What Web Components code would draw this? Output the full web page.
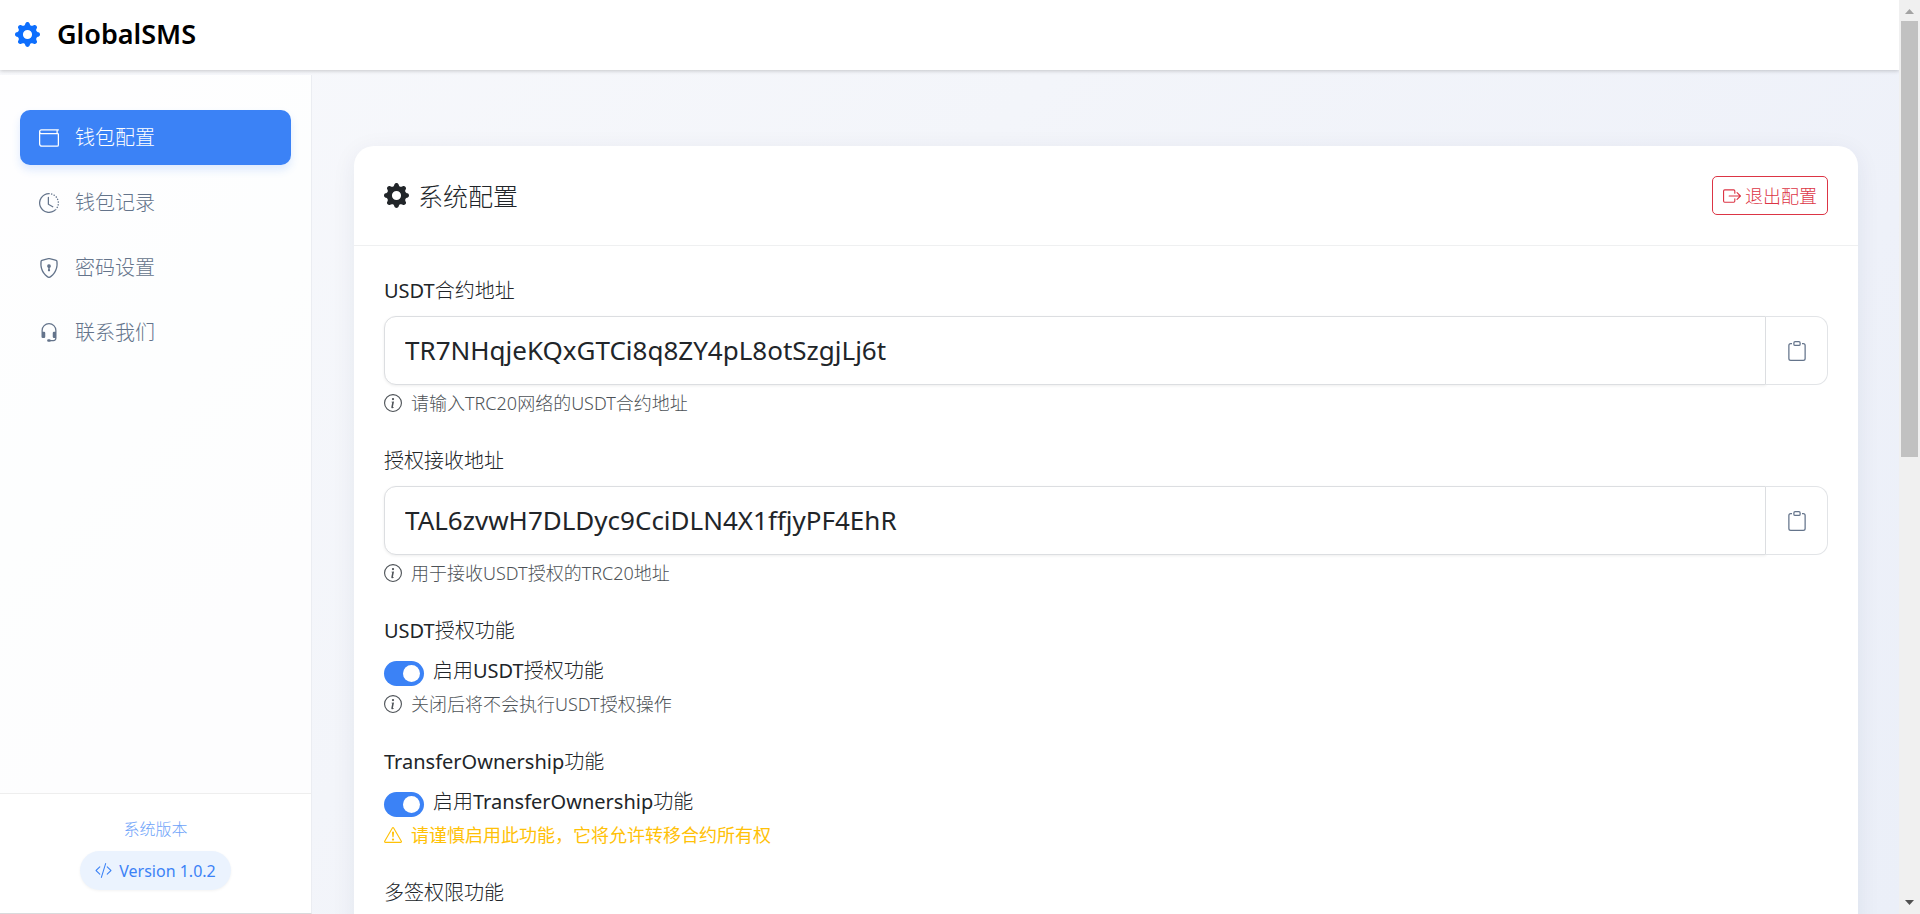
<!DOCTYPE html>
<html lang="zh-CN">
<head>
<meta charset="utf-8">
<title>GlobalSMS</title>
<style>
body { margin: 0; font-family: "Noto Sans", "Noto Sans CJK SC Light", "Noto Sans CJK SC", sans-serif; color: #212529; }
</style>
</head>
<body>
<app-shell></app-shell>
<script>
const ICONS = {
  gear: '<path d="M9.405 1.05c-.413-1.4-2.397-1.4-2.81 0l-.1.34a1.464 1.464 0 0 1-2.105.872l-.31-.17c-1.283-.698-2.686.705-1.987 1.987l.169.311c.446.82.023 1.841-.872 2.105l-.34.1c-1.4.413-1.4 2.397 0 2.81l.34.1a1.464 1.464 0 0 1 .872 2.105l-.17.31c-.698 1.283.705 2.686 1.987 1.987l.311-.169a1.464 1.464 0 0 1 2.105.872l.1.34c.413 1.4 2.397 1.4 2.81 0l.1-.34a1.464 1.464 0 0 1 2.105-.872l.31.17c1.283.698 2.686-.705 1.987-1.987l-.169-.311a1.464 1.464 0 0 1 .872-2.105l.34-.1c1.4-.413 1.4-2.397 0-2.81l-.34-.1a1.464 1.464 0 0 1-.872-2.105l.17-.31c.698-1.283-.705-2.686-1.987-1.987l-.311.169a1.464 1.464 0 0 1-2.105-.872zM8 10.93a2.929 2.929 0 1 1 0-5.86 2.929 2.929 0 0 1 0 5.858z"/>',
  wallet: '<path d="M0 3a2 2 0 0 1 2-2h13.5a.5.5 0 0 1 0 1H15v2a1 1 0 0 1 1 1v8.5a1.5 1.5 0 0 1-1.5 1.5h-12A2.5 2.5 0 0 1 0 12.5zm1 1.732V12.5A1.5 1.5 0 0 0 2.5 14h12a.5.5 0 0 0 .5-.5V5H2a2 2 0 0 1-1-.268M1 3a1 1 0 0 0 1 1h12V2H2a1 1 0 0 0-1 1"/>',
  clock: '<path d="M8.515 1.019A7 7 0 0 0 8 1V0a8 8 0 0 1 .589.022zm2.004.45a7 7 0 0 0-.985-.299l.219-.976q.576.129 1.126.342zm1.37.71a7 7 0 0 0-.439-.27l.493-.87a8 8 0 0 1 .979.654l-.615.789a7 7 0 0 0-.418-.302zm1.834 1.79a7 7 0 0 0-.653-.796l.724-.69q.406.429.747.91zm.744 1.352a7 7 0 0 0-.214-.468l.893-.45a8 8 0 0 1 .45 1.088l-.95.313a7 7 0 0 0-.179-.483m.53 2.507a7 7 0 0 0-.1-1.025l.985-.17q.1.58.116 1.17zm-.131 1.538q.05-.254.081-.51l.993.123a8 8 0 0 1-.23 1.155l-.964-.267q.069-.247.12-.501m-.952 2.379q.276-.436.486-.908l.914.405q-.24.54-.555 1.038zm-.964 1.205q.183-.183.35-.378l.758.653a8 8 0 0 1-.401.432z"/><path d="M8 1a7 7 0 1 0 4.95 11.95l.707.707A8.001 8.001 0 1 1 8 0z"/><path d="M7.5 3a.5.5 0 0 1 .5.5v5.21l3.248 1.856a.5.5 0 0 1-.496.868l-3.5-2A.5.5 0 0 1 7 9V3.5a.5.5 0 0 1 .5-.5"/>',
  shield: '<path d="M5.338 1.59a61 61 0 0 0-2.837.856.48.48 0 0 0-.328.39c-.554 4.157.726 7.19 2.253 9.188a10.7 10.7 0 0 0 2.287 2.233c.346.244.652.42.893.533q.18.085.293.118a1 1 0 0 0 .101.025 1 1 0 0 0 .1-.025q.114-.034.294-.118c.24-.113.547-.29.893-.533a10.7 10.7 0 0 0 2.287-2.233c1.527-1.997 2.807-5.031 2.253-9.188a.48.48 0 0 0-.328-.39c-.651-.213-1.75-.56-2.837-.855C9.552 1.29 8.531 1.067 8 1.067c-.53 0-1.552.223-2.662.524zM5.072.56C6.157.265 7.31 0 8 0s1.843.265 2.928.56c1.11.3 2.229.655 2.887.87a1.54 1.54 0 0 1 1.044 1.262c.596 4.477-.787 7.795-2.465 9.99a11.8 11.8 0 0 1-2.517 2.453 7 7 0 0 1-1.048.625c-.28.132-.581.24-.829.24s-.548-.108-.829-.24a7 7 0 0 1-1.048-.625 11.8 11.8 0 0 1-2.517-2.453C1.928 10.487.545 7.169 1.141 2.692A1.54 1.54 0 0 1 2.185 1.43 63 63 0 0 1 5.072.56"/><path d="M9.5 6.5a1.5 1.5 0 0 1-1 1.415l.385 1.99a.5.5 0 0 1-.491.595h-.788a.5.5 0 0 1-.49-.595l.384-1.99a1.5 1.5 0 1 1 2-1.415"/>',
  headset: '<path d="M8 1a5 5 0 0 0-5 5v1h1a1 1 0 0 1 1 1v3a1 1 0 0 1-1 1H3a1 1 0 0 1-1-1V6a6 6 0 1 1 12 0v6a2.5 2.5 0 0 1-2.5 2.5H9.366a1 1 0 0 1-.866.5h-1a1 1 0 1 1 0-2h1a1 1 0 0 1 .866.5H11.5A1.5 1.5 0 0 0 13 12h-1a1 1 0 0 1-1-1V8a1 1 0 0 1 1-1h1V6a5 5 0 0 0-5-5"/>',
  exit: '<path fill-rule="evenodd" d="M10 12.5a.5.5 0 0 1-.5.5h-8a.5.5 0 0 1-.5-.5v-9a.5.5 0 0 1 .5-.5h8a.5.5 0 0 1 .5.5v2a.5.5 0 0 0 1 0v-2A1.5 1.5 0 0 0 9.5 2h-8A1.5 1.5 0 0 0 0 3.5v9A1.5 1.5 0 0 0 1.5 14h8a1.5 1.5 0 0 0 1.5-1.5v-2a.5.5 0 0 0-1 0z"/><path fill-rule="evenodd" d="M15.854 8.354a.5.5 0 0 0 0-.708l-3-3a.5.5 0 0 0-.708.708L14.293 7.5H5.5a.5.5 0 0 0 0 1h8.793l-2.147 2.146a.5.5 0 0 0 .708.708z"/>',
  clipboard: '<path d="M4 1.5H3a2 2 0 0 0-2 2V14a2 2 0 0 0 2 2h10a2 2 0 0 0 2-2V3.5a2 2 0 0 0-2-2h-1v1h1a1 1 0 0 1 1 1V14a1 1 0 0 1-1 1H3a1 1 0 0 1-1-1V3.5a1 1 0 0 1 1-1h1z"/><path d="M9.5 1a.5.5 0 0 1 .5.5v1a.5.5 0 0 1-.5.5h-3a.5.5 0 0 1-.5-.5v-1a.5.5 0 0 1 .5-.5zm-3-1A1.5 1.5 0 0 0 5 1.5v1A1.5 1.5 0 0 0 6.5 4h3A1.5 1.5 0 0 0 11 2.5v-1A1.5 1.5 0 0 0 9.5 0z"/>',
  info: '<path d="M8 15A7 7 0 1 1 8 1a7 7 0 0 1 0 14m0 1A8 8 0 1 0 8 0a8 8 0 0 0 0 16"/><path d="m8.93 6.588-2.29.287-.082.38.45.083c.294.07.352.176.288.469l-.738 3.468c-.194.897.105 1.319.808 1.319.545 0 1.178-.252 1.465-.598l.088-.416c-.2.176-.492.246-.686.246-.275 0-.375-.193-.304-.533zM9 4.5a1 1 0 1 1-2 0 1 1 0 0 1 2 0"/>',
  warning: '<path d="M7.938 2.016A.13.13 0 0 1 8.002 2a.13.13 0 0 1 .063.016.15.15 0 0 1 .054.057l6.857 11.667c.036.06.035.124.002.183a.2.2 0 0 1-.054.06.1.1 0 0 1-.066.017H1.146a.1.1 0 0 1-.066-.017.2.2 0 0 1-.054-.06.18.18 0 0 1 .002-.183L7.884 2.073a.15.15 0 0 1 .054-.057m1.044-.45a1.13 1.13 0 0 0-1.96 0L.165 13.233c-.457.778.091 1.767.98 1.767h13.713c.889 0 1.438-.99.98-1.767z"/><path d="M7.002 12a1 1 0 1 1 2 0 1 1 0 0 1-2 0M7.1 5.995a.905.905 0 1 1 1.8 0l-.35 3.507a.552.552 0 0 1-1.1 0z"/>',
  code: '<path d="M10.478 1.647a.5.5 0 1 0-.956-.294l-4 13a.5.5 0 0 0 .956.294zM4.854 4.146a.5.5 0 0 1 0 .708L1.707 8l3.147 3.146a.5.5 0 0 1-.708.708l-3.5-3.5a.5.5 0 0 1 0-.708l3.5-3.5a.5.5 0 0 1 .708 0m6.292 0a.5.5 0 0 0 0 .708L14.293 8l-3.147 3.146a.5.5 0 0 0 .708.708l3.5-3.5a.5.5 0 0 0 0-.708l-3.5-3.5a.5.5 0 0 0-.708 0"/>'
};

const BOX = '*, *::before, *::after { box-sizing: border-box; }';

function define(name, render) {
  customElements.define(name, class extends HTMLElement {
    connectedCallback() {
      if (this.shadowRoot) return;
      this.attachShadow({ mode: 'open' }).innerHTML = render(this);
    }
  });
}

define('bi-icon', el => `
  <style>:host { display: inline-flex; flex: none; width: 20px; height: 20px; } svg { width: 100%; height: 100%; fill: currentColor; }</style>
  <svg viewBox="0 0 16 16" aria-hidden="true">${ICONS[el.getAttribute('name')]}</svg>`);

define('top-bar', () => `
  <style>${BOX}
  :host { display: flex; align-items: center; gap: 17px; height: 70px; padding: 0 15px 2px; box-sizing: border-box; background: #fff;
    box-shadow: 0 1px 4px rgba(0,0,0,.2); position: relative; z-index: 2; }
  bi-icon { width: 25px; height: 25px; color: #0d6efd; }
  a { color: #000; text-decoration: none; font-weight: 600; font-size: 27px; line-height: 40px; }
  </style>
  <bi-icon name="gear"></bi-icon><a href="#"><slot></slot></a>`);

define('nav-item', el => `
  <style>${BOX}
  :host { display: block; }
  a { display: flex; align-items: center; gap: 16px; height: 55px; padding: 0 19px; border-radius: 10px;
    font-size: 20px; line-height: 30px; color: #64748b; text-decoration: none; }
  :host([active]) a { background: #3b82f6; color: #fff; box-shadow: 0 5px 8px rgba(59,130,246,.16); }
  </style>
  <a href="#"><bi-icon name="${el.getAttribute('icon')}"></bi-icon><slot></slot></a>`);

define('side-bar', () => `
  <style>${BOX}
  :host { display: flex; flex-direction: column; margin-top: 5px; background: rgba(255,255,255,.8); border-right: 1px solid #ebedf2; border-bottom: 1px solid #d9dadc; }
  nav { flex: 1; display: flex; flex-direction: column; gap: 10px; padding: 35px 20px; }
  footer { display: flex; flex-direction: column; align-items: center; gap: 10px; padding: 23px 20px; border-top: 1px solid #eee; background: #fff; }
  p { margin: 0; font-size: 16px; line-height: 24px; color: #6ea3f9; }
  .version { display: flex; align-items: center; gap: 7px; height: 39px; padding: 0 15px; border-radius: 20px;
    background: #ebf3fe; color: #3b82f6; font-size: 16px; line-height: 24px; box-shadow: 0 1px 3px rgba(0,0,0,.05); }
  .version bi-icon { width: 17px; height: 17px; }
  </style>
  <nav><nav-item icon="wallet" active>钱包配置</nav-item><nav-item icon="clock">钱包记录</nav-item><nav-item icon="shield">密码设置</nav-item><nav-item icon="headset">联系我们</nav-item></nav>
  <footer><p>系统版本</p><span class="version"><bi-icon name="code"></bi-icon><span>Version 1.0.2</span></span></footer>`);

define('help-text', el => `
  <style>${BOX}
  :host { display: flex; align-items: center; gap: 9px; margin-top: 5px; font-size: 18px; font-weight: 300; line-height: 26px; color: #4d5257; }
  :host([warn]) { color: #ffc107; font-family: "Noto Sans", "Noto Sans CJK SC", sans-serif; font-weight: 400; }
  bi-icon { width: 18px; height: 18px; }
  </style>
  <bi-icon name="${el.hasAttribute('warn') ? 'warning' : 'info'}"></bi-icon><span><slot></slot></span>`);

define('address-field', el => `
  <style>${BOX}
  :host { display: block; }
  label { display: block; margin-bottom: 10px; font-size: 20px; line-height: 30px; }
  .group { display: flex; height: 69px; }
  input { flex: 1; min-width: 0; padding: 0 20px 2px; border: 1px solid #dcdee1; border-radius: 12px 0 0 12px; background: #fff;
    color: #212529; font: 400 26px/40px "Noto Sans", sans-serif; outline: none; box-shadow: 0 1px 3px rgba(0,0,0,.07); }
  button { display: flex; align-items: center; justify-content: center; width: 62px; padding: 0; border: 1px solid #e2e4e7; border-left: 0;
    border-radius: 0 12px 12px 0; background: #fff; color: #64748b; position: relative; }
  </style>
  <label for="value">${el.getAttribute('label')}</label>
  <div class="group"><input id="value" type="text" value="${el.getAttribute('value')}"><button type="button" aria-label="复制"><bi-icon name="clipboard"></bi-icon></button></div>
  <slot></slot>`);

define('switch-field', el => `
  <style>${BOX}
  :host { display: block; font-size: 20px; line-height: 30px; }
  .title { margin-bottom: 10px; }
  .row { display: flex; align-items: center; gap: 9px; height: 30px; }
  input { appearance: none; display: flex; justify-content: flex-end; align-items: center; width: 40px; height: 25px; margin: 5px 0 0; padding: 0 4px; border-radius: 13px; background: #3b82f6; }
  input::before { content: ""; width: 17px; height: 17px; border-radius: 50%; background: #fff; }
  </style>
  <div class="title">${el.getAttribute('label')}</div>
  ${el.hasAttribute('option') ? `<div class="row"><input id="toggle" type="checkbox" role="switch" checked><label for="toggle">${el.getAttribute('option')}</label></div>` : ''}
  <slot></slot>`);

define('config-card', () => `
  <style>${BOX}
  :host { display: block; background: #fff; border-radius: 20px; box-shadow: 0 5px 25px rgba(30,40,90,.07); }
  header { display: flex; align-items: center; justify-content: space-between; height: 100px; padding: 0 30px; border-bottom: 1px solid #eff0f1; }
  h1 { display: flex; align-items: center; gap: 9px; margin: 0; font-size: 25px; font-weight: 400; line-height: 36px; }
  h1 bi-icon { width: 25px; height: 25px; }
  button { display: flex; align-items: center; gap: 4px; height: 39px; padding: 0 10px; border: 1px solid #dc3545; border-radius: 5px;
    background: none; color: #dc3545; font-family: inherit; font-size: 18px; line-height: 26px; }
  button bi-icon { width: 18px; height: 18px; }
  form { display: flex; flex-direction: column; gap: 30px; padding: 30px; }
  </style>
  <header><h1><bi-icon name="gear"></bi-icon>系统配置</h1><button type="button"><bi-icon name="exit"></bi-icon>退出配置</button></header>
  <form>
    <address-field label="USDT合约地址" value="TR7NHqjeKQxGTCi8q8ZY4pL8otSzgjLj6t"><help-text>请输入TRC20网络的USDT合约地址</help-text></address-field>
    <address-field label="授权接收地址" value="TAL6zvwH7DLDyc9CciDLN4X1ffjyPF4EhR"><help-text>用于接收USDT授权的TRC20地址</help-text></address-field>
    <switch-field label="USDT授权功能" option="启用USDT授权功能"><help-text>关闭后将不会执行USDT授权操作</help-text></switch-field>
    <switch-field label="TransferOwnership功能" option="启用TransferOwnership功能"><help-text warn>请谨慎启用此功能，它将允许转移合约所有权</help-text></switch-field>
    <switch-field label="多签权限功能"></switch-field>
  </form>`);

define('scroll-track', () => `
  <style>${BOX}
  :host { display: flex; flex-direction: column; align-items: center; background: #f0f0f0; padding: 0 2px; position: relative; z-index: 3; }
  svg { flex: none; width: 17px; height: 21px; }
  .track { flex: 1; width: 100%; }
  .thumb { height: 50%; background: #c1c1c1; }
  </style>
  <svg viewBox="0 0 17 21"><path d="M4 14L8.5 9L13 14z" fill="#a3a3a3"/></svg>
  <div class="track"><div class="thumb"></div></div>
  <svg viewBox="0 0 17 21"><path d="M4 7L8.5 12L13 7z" fill="#505050"/></svg>`);

define('app-shell', () => `
  <style>${BOX}
  :host { display: grid; grid-template-columns: minmax(0,1fr) 21px; height: 100vh; overflow: hidden; }
  .page { display: grid; grid-template-rows: auto minmax(0,1fr); min-height: 0; background: linear-gradient(135deg, #f8f9fc 0%, #f3f5fa 40%, #eef1f9 75%, #ebeff8 100%); }
  .body { display: grid; grid-template-columns: 312px minmax(0,1fr); min-height: 0; }
  main { overflow: hidden; padding: 76px 41px 76px 42px; }
  </style>
  <div class="page"><top-bar>GlobalSMS</top-bar>
    <div class="body"><side-bar></side-bar><main><config-card></config-card></main></div></div>
  <scroll-track></scroll-track>`);
</script>
</body>
</html>
